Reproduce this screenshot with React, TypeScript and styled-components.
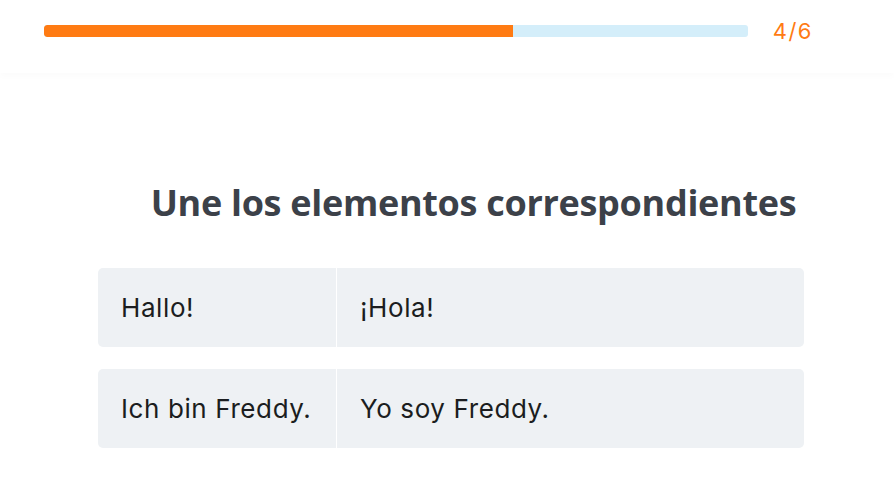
import React from 'react';
import styled, { createGlobalStyle } from 'styled-components';

// --- Settings ---------------------------------------------------------------
const ORANGE = '#ff7b13';
const TRACK = '#d4eefa';
const CELL_BG = '#eef1f4';
const FONT = '"Open Sans", "Liberation Sans", sans-serif';
const CELL_FONT = 'Inter, "Open Sans", sans-serif';

const pairs = [
  { source: 'Hallo!', target: '¡Hola!' },
  { source: 'Ich bin Freddy.', target: 'Yo soy Freddy.' },
];

const step = 4;
const total = 6;

const GlobalStyle = createGlobalStyle`
  html, body {
    margin: 0;
    padding: 0;
    background: #ffffff;
    font-family: ${FONT};
  }
`;

// --- Header -----------------------------------------------------------------
const Header = styled.header`
  height: 73px;
  display: flex;
  align-items: flex-start;
  gap: 25px;
  padding: 25px 81px 0 44px;
  box-shadow: 0 4px 6px rgba(0, 0, 0, 0.015);
  box-sizing: border-box;
`;

const Track = styled.div`
  flex: 1;
  height: 12px;
  border-radius: 3px;
  background: ${TRACK};
  overflow: hidden;
  display: flex;
`;

const Fill = styled.div`
  height: 100%;
  background: ${ORANGE};
  border-radius: 3px 0 0 3px;
`;

const Counter = styled.span`
  margin-top: -8px;
  color: ${ORANGE};
  font-family: ${CELL_FONT};
  font-size: 22px;
  line-height: 28px;
  letter-spacing: 1.5px;
`;

// --- Exercise ---------------------------------------------------------------
const Main = styled.main`
  display: flex;
  flex-direction: column;
  align-items: center;
  padding: 108px 0 0 8px;
`;

const Title = styled.h1`
  margin: 0 0 43px 45px;
  font-size: 36px;
  line-height: 44px;
  font-weight: 700;
  letter-spacing: -0.3px;
  color: #3c4149;
  white-space: nowrap;
`;

const Pairs = styled.div`
  width: 706px;
  display: flex;
  flex-direction: column;
  gap: 22px;
`;

const Row = styled.div`
  display: grid;
  grid-template-columns: 238px 1fr;
  gap: 1px;
  height: 79px;
  border-radius: 5px;
  overflow: hidden;
  background: #ffffff;
`;

const Cell = styled.div`
  display: flex;
  align-items: center;
  padding-left: 23px;
  background: ${CELL_BG};
  font-family: ${CELL_FONT};
  font-size: 26px;
  letter-spacing: 0.6px;
  color: #1b1d20;
`;

export default function App() {
  return (
    <>
      <GlobalStyle />
      <Header>
        <Track>
          <Fill style={{ width: `${((513 - 44) / 704) * 100}%` }} />
        </Track>
        <Counter>
          {step}/{total}
        </Counter>
      </Header>
      <Main>
        <Title>Une los elementos correspondientes</Title>
        <Pairs>
          {pairs.map((p) => (
            <Row key={p.source}>
              <Cell>{p.source}</Cell>
              <Cell>{p.target}</Cell>
            </Row>
          ))}
        </Pairs>
      </Main>
    </>
  );
}
